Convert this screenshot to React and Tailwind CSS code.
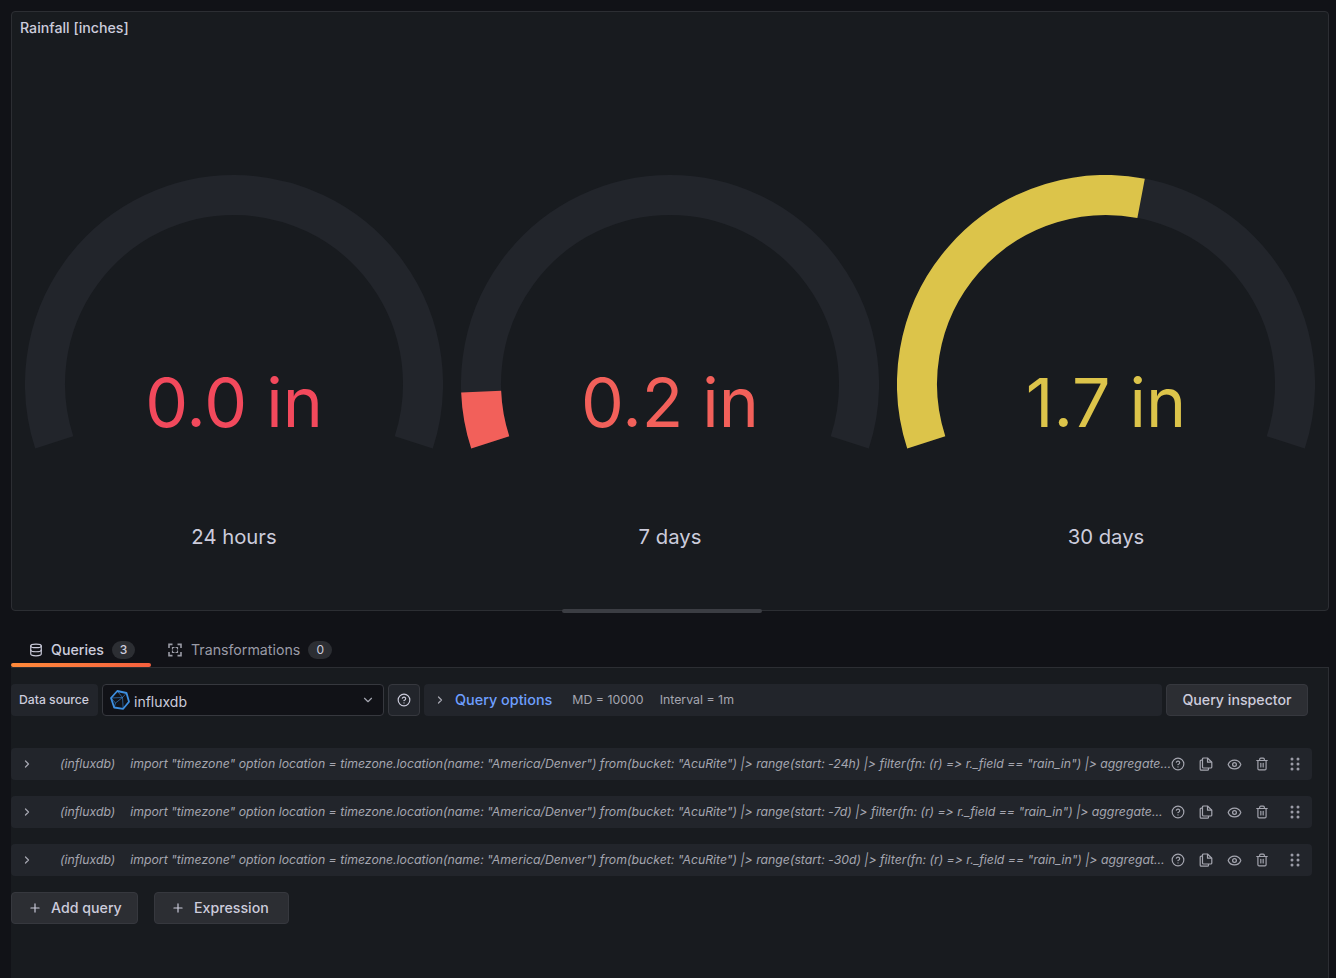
import { ChevronDown, ChevronRight, CircleHelp, Database, Eye, Plus, Trash2 } from 'lucide-react';

const gauges = [
  { value: '0.0 in', label: '24 hours', textColor: 'text-[#f2495c]', fill: null },
  { value: '0.2 in', label: '7 days', textColor: 'text-[#f2605a]', fill: '#f2605a', end: 182.3 },
  { value: '1.7 in', label: '30 days', textColor: 'text-[#dcc44a]', fill: '#dcc44a', end: 79.3 },
];

const queries = [
  'import "timezone" option location = timezone.location(name: "America/Denver") from(bucket: "AcuRite") |> range(start: -24h) |> filter(fn: (r) => r._field == "rain_in") |> aggregate…',
  'import "timezone" option location = timezone.location(name: "America/Denver") from(bucket: "AcuRite") |> range(start: -7d) |> filter(fn: (r) => r._field == "rain_in") |> aggregate…',
  'import "timezone" option location = timezone.location(name: "America/Denver") from(bucket: "AcuRite") |> range(start: -30d) |> filter(fn: (r) => r._field == "rain_in") |> aggregat…',
];

// angle in degrees, 0 = pointing right, 90 = up
function arcPath(from, to) {
  const cx = 209;
  const cy = 209;
  const r = 189;
  const point = (a) => {
    const rad = (a * Math.PI) / 180;
    return `${cx + r * Math.cos(rad)} ${cy - r * Math.sin(rad)}`;
  };
  const large = Math.abs(from - to) > 180 ? 1 : 0;
  return `M ${point(from)} A ${r} ${r} 0 ${large} 1 ${point(to)}`;
}

function Gauge({ value, label, textColor, fill, end }) {
  return (
    <div className="flex flex-col items-center">
      <div className="relative w-[418px] h-[280px]">
        <svg width="418" height="280" viewBox="0 0 418 280" fill="none">
          <path d={arcPath(198, -18)} stroke="#22252b" strokeWidth="40" />
          {fill && <path d={arcPath(198, end)} stroke={fill} strokeWidth="40" />}
        </svg>
        <div className={`absolute inset-x-0 top-[184px] text-center text-[68px] leading-[86px] ${textColor}`}>{value}</div>
      </div>
      <div className="mt-[70px] text-[20.3px] leading-6 text-[#ccccdc]">{label}</div>
    </div>
  );
}

function TransformIcon() {
  return (
    <svg width="16" height="16" viewBox="0 0 16 16" fill="none" stroke="currentColor" strokeWidth="1.6">
      <path d="M2 6V2.4H5.5M10.5 2.4H14V6M14 10V13.6H10.5M5.5 13.6H2V10" />
      <path d="M7.5 5.5H5.5V7.5M8.5 5.5H10.5V7.5M10.5 8.5V10.5H8.5M7.5 10.5H5.5V8.5" strokeWidth="1.2" />
    </svg>
  );
}

function InfluxLogo() {
  return (
    <svg width="20" height="20" viewBox="0 0 20 20" fill="none" stroke="#3d8fe0">
      <path d="M7.3 1 16.5 3 19 11.8 13.2 18.8 4.2 17.5 1 8Z" strokeWidth="1.8" strokeLinejoin="round" />
      <path d="M7.3 1 12.5 7.5 1 8M12.5 7.5 16.5 3M12.5 7.5 13.2 18.8M12.5 7.5 5.5 13 4.2 17.5M5.5 13 1 8" strokeWidth="0.6" />
    </svg>
  );
}

function CopyIcon() {
  return (
    <svg width="14" height="14" viewBox="0 0 14 14" fill="none" stroke="currentColor" strokeWidth="1.2" strokeLinejoin="round">
      <path d="M3.5 3.2H2.2a1 1 0 0 0-1 1v8a1 1 0 0 0 1 1h6.3a1 1 0 0 0 1-1V11" />
      <path d="M4.5 1H8.500L12.800 5.200V10a1 1 0 0 1-1 1H4.500a1 1 0 0 1-1-1V2a1 1 0 0 1 1-1Z" />
      <path d="M8.500 1V5.200H12.800" />
    </svg>
  );
}

function DragDots() {
  return (
    <svg width="10" height="14" viewBox="0 0 10 14" fill="#9a9ba6">
      <circle cx="2" cy="2" r="1.5" />
      <circle cx="8" cy="2" r="1.5" />
      <circle cx="2" cy="7" r="1.5" />
      <circle cx="8" cy="7" r="1.5" />
      <circle cx="2" cy="12" r="1.5" />
      <circle cx="8" cy="12" r="1.5" />
    </svg>
  );
}

function QueryRow({ text }) {
  return (
    <div className="flex items-center w-[1301px] h-8 bg-[#22252b] rounded-sm text-[#a5a6b0]">
      <ChevronRight size={12} className="ml-[10px] shrink-0" strokeWidth={2.5} />
      <span className="ml-[27px] shrink-0 text-[12.25px] italic">(influxdb)</span>
      <span className="ml-[15px] flex-1 min-w-0 whitespace-nowrap text-[12.28px] italic [font-variant-ligatures:none] [font-feature-settings:'calt'_0]">{text}</span>
      <CircleHelp size={14} className="shrink-0 ml-px" />
      <span className="shrink-0 ml-[14px] flex"><CopyIcon /></span>
      <Eye size={15} className="shrink-0 ml-[14px]" />
      <Trash2 size={14} className="shrink-0 ml-[13px]" />
      <span className="shrink-0 ml-[21px] mr-3 flex"><DragDots /></span>
    </div>
  );
}

export default function App() {
  return (
    <div className="h-[978px] overflow-hidden bg-[#111217] pl-[11px] pt-[11px] text-[#ccccdc] font-['Inter',sans-serif]">
      <div className="relative w-[1318px] h-[600px] bg-[#181b1f] border border-[#2c2e33] rounded-sm">
        <div className="pl-2 pt-[7px] text-[14.2px] leading-[18px] font-medium text-[#ccccdc]">Rainfall [inches]</div>
        <div className="grid grid-cols-3 w-[1308px] ml-1 mt-[138px]">
          {gauges.map((g) => (
            <Gauge key={g.label} {...g} />
          ))}
        </div>
        <div className="absolute left-[550px] -bottom-[3px] w-[200px] h-1 rounded-sm bg-[#3b3d43]" />
      </div>

      <div className="w-[1318px] flex h-[33px] mt-[23px] text-[14.2px]">
        <div className="relative flex items-center gap-2 w-[140px] pl-[18px] pb-[2px] text-[#ccccdc] font-medium">
          <Database size={14} />
          <span>Queries</span>
          <span className="w-[23px] text-center h-[18px] leading-[18px] rounded-full bg-[#2c2e33] text-xs text-[#ccccdc]">3</span>
          <div className="absolute left-0 right-0 bottom-0 h-1 rounded-sm bg-gradient-to-r from-[#ff8a3a] to-[#f55f3e]" />
        </div>
        <div className="flex items-center gap-2 ml-[16px] pb-[2px] text-[#9a9ba6]">
          <TransformIcon />
          <span>Transformations</span>
          <span className="w-6 text-center h-[18px] leading-[18px] rounded-full bg-[#2c2e33] text-xs text-[#ccccdc]">0</span>
        </div>
      </div>

      <div className="w-[1318px] h-[400px] bg-[#181b1f] border-t border-r border-[#2c2e33] pt-4">
        <div className="flex w-[1297px] h-8 gap-1 text-[14.2px]">
          <div className="flex items-center px-2 w-[87px] bg-[#22252b] rounded-sm text-[12.2px] font-medium whitespace-nowrap">Data source</div>
          <div className="flex items-center w-[282px] bg-[#111217] border border-[#36383e] rounded-sm pl-[7px] pr-[8px]">
            <InfluxLogo />
            <span className="ml-1 flex-1 pt-0.5 text-[14px]">influxdb</span>
            <ChevronDown size={14} className="text-[#a5a6b0]" />
          </div>
          <div className="flex items-center justify-center w-8 bg-[#22252b] border border-[#36383e] rounded-sm">
            <CircleHelp size={14} />
          </div>
          <div className="flex flex-1 items-center bg-[#22252b] rounded-sm pl-[10px]">
            <ChevronRight size={12} className="text-[#a5a6b0]" strokeWidth={2.5} />
            <span className="ml-[9px] text-[14.4px] font-medium text-[#6e9fff]">Query options</span>
            <span className="ml-5 text-[12.35px] text-[#a5a6b0]">MD = 10000</span>
            <span className="ml-4 text-[12.35px] text-[#a5a6b0]">Interval = 1m</span>
          </div>
          <div className="flex items-center justify-center w-[142px] bg-[#2c2e33] border border-[#36383e] rounded-sm font-medium">Query inspector</div>
        </div>

        <div className="flex flex-col gap-4 mt-8">
          {queries.map((q) => (
            <QueryRow key={q} text={q} />
          ))}
        </div>

        <div className="flex gap-4 mt-4 text-[14.2px] font-medium">
          <div className="flex items-center gap-[9px] w-[127px] h-8 pl-4 bg-[#2c2e33] border border-[#36383e] rounded-sm">
            <Plus size={14} />
            <span>Add query</span>
          </div>
          <div className="flex items-center gap-[9px] w-[135px] h-8 pl-4 bg-[#2c2e33] border border-[#36383e] rounded-sm">
            <Plus size={14} />
            <span>Expression</span>
          </div>
        </div>
      </div>
    </div>
  );
}
